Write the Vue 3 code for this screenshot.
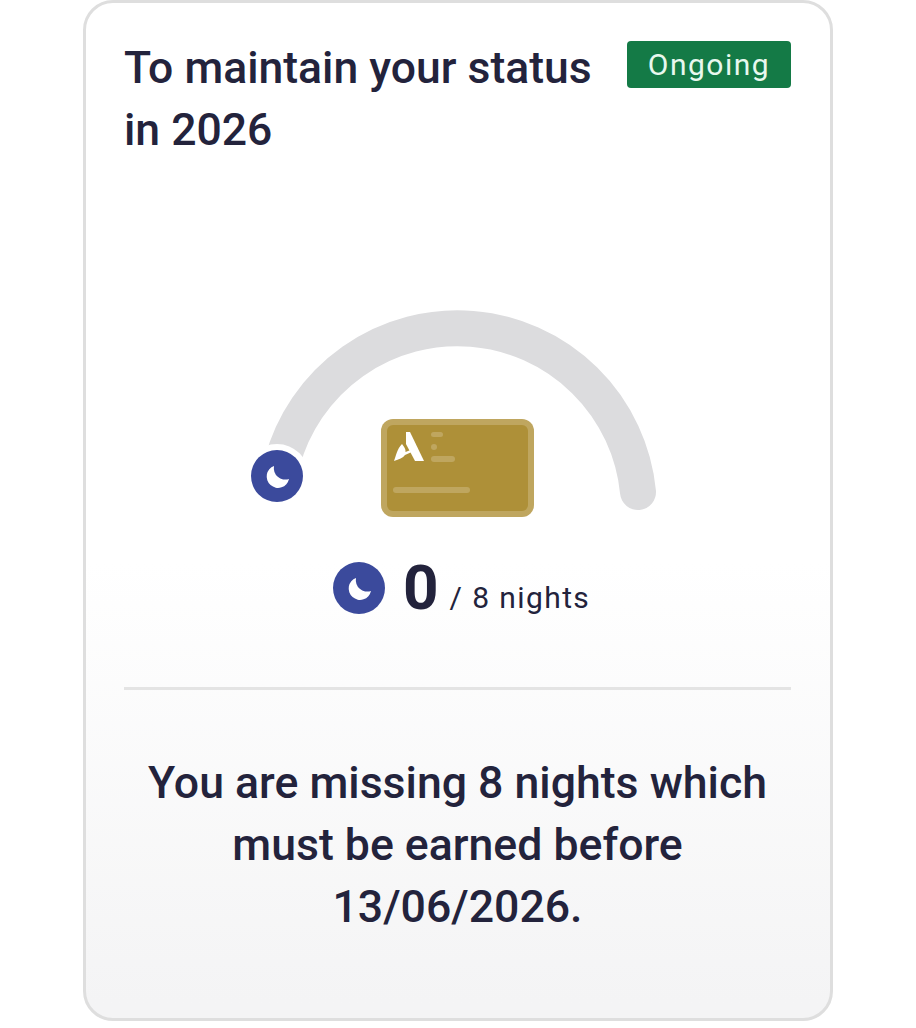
<script setup>
const moon = 'M23 16A11.300 11.300 0 1 0 38 29A11.500 11.500 0 0 1 23 16Z'
</script>

<template>
  <div class="page">
    <section class="card">
      <header class="head">
        <h2 class="title">To maintain your status in 2026</h2>
        <span class="badge">Ongoing</span>
      </header>

      <svg class="gauge" width="416" height="214" viewBox="0 0 416 214">
        <path d="M31 159A181.500 181.500 0 0 1 387 188" fill="none" stroke="#dcdcde" stroke-width="36" stroke-linecap="round" />
        <circle cx="26" cy="172" r="32" fill="#fff" />
        <g transform="translate(0 146)">
          <circle cx="26" cy="26" r="26" fill="#3b4a9c" />
          <path :d="moon" fill="#fff" />
        </g>
        <g transform="translate(130 115)">
          <rect width="153" height="98" rx="12" fill="#bfa65f" />
          <rect x="6" y="6" width="141" height="86" rx="6" fill="#ae9038" />
          <path d="M25 13L29 13L43 42L34 42L25 25Z" fill="#fff" />
          <path d="M13 42C15 37 16 30 21 25C23 28 25 30 24.500 33L32 30L33 32L24 36C22 39 18 40 13 42Z" fill="#fff" />
          <g fill="#bfa65f">
            <rect x="50" y="13" width="12" height="5" rx="2.500" />
            <circle cx="53" cy="28" r="3" />
            <rect x="50" y="37" width="24" height="6" rx="3" />
            <rect x="12" y="68" width="77" height="6" rx="3" />
          </g>
        </g>
      </svg>

      <div class="score">
        <svg width="52" height="52" viewBox="0 0 52 52">
          <circle cx="26" cy="26" r="26" fill="#3b4a9c" />
          <path :d="moon" fill="#fff" />
        </svg>
        <strong class="count">0</strong>
        <span class="unit">/ 8 nights</span>
      </div>

      <hr class="rule" />

      <p class="message">You are missing 8 nights which must be earned before 13/06/2026.</p>
    </section>
    <section class="card next"></section>
  </div>
</template>

<style scoped>
.page {
  width: 916px;
  height: 1028px;
  box-sizing: border-box;
  padding-left: 83px;
  display: flex;
  gap: 83px;
  overflow: hidden;
  background: #fff;
  font-family: Roboto, "Liberation Sans", sans-serif;
  color: #23233c;
}
.card {
  flex: 0 0 750px;
  height: 1021px;
  box-sizing: border-box;
  border: 3px solid #dedede;
  border-radius: 30px;
  padding: 34px 39px 0 38px;
  background: linear-gradient(#fff 0, #fff 560px, #f4f4f5 1000px);
}
.next {
  border-color: #efefef;
  border-width: 2px;
  background: #fff;
}
.head {
  display: flex;
  justify-content: space-between;
  align-items: flex-start;
}
.title {
  margin: 0;
  width: 490px;
  font-size: 44.500px;
  line-height: 62px;
  font-weight: 500;
}
.badge {
  margin-top: 4px;
  width: 164px;
  height: 47px;
  border-radius: 4px;
  background: #147a46;
  color: #e8f8ee;
  font-size: 30px;
  line-height: 47px;
  text-align: center;
  letter-spacing: 1.500px;
}
.gauge {
  display: block;
  margin: 143px auto 0 127px;
}
.score {
  margin-top: 35px;
  margin-left: 209px;
  display: flex;
  align-items: center;
  height: 70px;
}
.count {
  margin-left: 18px;
  font-size: 62px;
  font-weight: 700;
  line-height: 70px;
}
.unit {
  margin-left: 11px;
  margin-top: 18px;
  font-size: 30px;
  letter-spacing: 1.400px;
}
.rule {
  margin: 64px 0 0;
  border: 0;
  height: 3px;
  background: #e4e4e4;
}
.message {
  margin: 62px 0 0;
  text-align: center;
  font-size: 44.600px;
  line-height: 62px;
  font-weight: 500;
}
</style>
